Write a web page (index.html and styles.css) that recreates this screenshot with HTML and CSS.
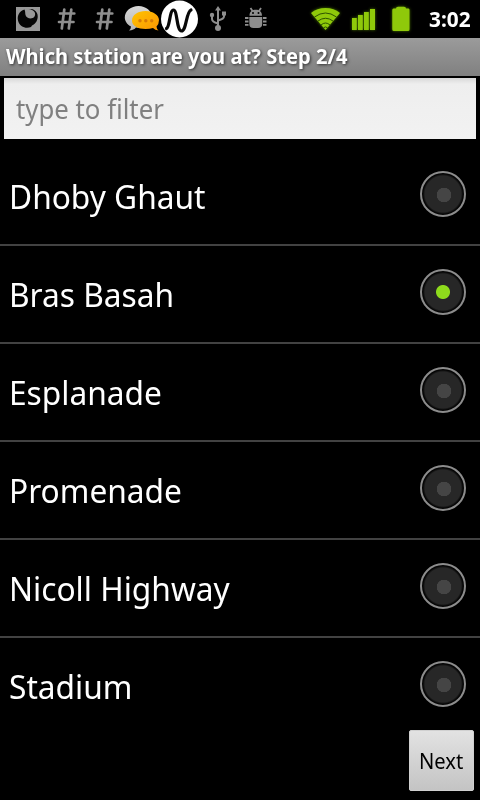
FILE: index.html
```html
<!DOCTYPE html>
<html lang="en">
  <head>
    <meta charset="UTF-8" />
    <meta name="viewport" content="width=device-width, initial-scale=1.0" />
    <title>Which station are you at?</title>
    <link rel="stylesheet" href="styles.css">
  </head>
  <body>
    <header class="status-bar">
      <div class="icons">
        <svg class="icon" viewBox="0 0 38 38">
          <rect x="7" y="7" width="24" height="24" fill="#989898" />
          <path d="M15.500 9.500C10 11 8 16 9 20.500C10.500 27 17 29 22 27L23 25.500C27 24 29.500 19 28.500 14.500C27.500 10.500 24 8.500 19.500 9C25 9.500 27.500 13 25.500 16.500C23 20 17.500 18.500 16.500 15C16 13 16.500 11.500 15.500 9.500Z" fill="#050505" />
        </svg>
        <svg class="icon" viewBox="0 0 38 38">
          <path d="M17.300 9.500L14.800 28.500M24.300 9.500L21.800 28.500M13 13.500H27.300M12 22H26.500" fill="none" stroke="#8e8e8e" stroke-width="2.700" stroke-linecap="round" />
        </svg>
        <svg class="icon" viewBox="0 0 38 38">
          <path d="M17.300 9.500L14.800 28.500M24.300 9.500L21.800 28.500M13 13.500H27.300M12 22H26.500" fill="none" stroke="#8e8e8e" stroke-width="2.700" stroke-linecap="round" />
        </svg>
        <svg class="icon" viewBox="0 0 38 38">
          <defs>
            <linearGradient id="silver" x2="0" y2="1">
              <stop offset="0" stop-color="#d8d8d8" />
              <stop offset="1" stop-color="#b5b5b5" />
            </linearGradient>
            <linearGradient id="orange" x2="1" y2="1">
              <stop offset="0" stop-color="#ffc400" />
              <stop offset="1" stop-color="#fa9404" />
            </linearGradient>
          </defs>
          <path d="M15.500 6C8 6 1.800 11 1.800 17.500C1.800 21 4 24.500 8 26.500Q8 29 6 30.500Q11 30 13 27.500C22 29 29 24 29 17.500C29 11 23 6 15.500 6Z" fill="url(#silver)" />
          <path d="M22.500 11C15 11 9 15 9 20.500C9 26 15 29 22.500 29Q27 29 30 28Q32 30 35.500 30.500Q33.500 28.500 33.500 26.500Q36 24 36 20C36 15 30 11 22.500 11Z" fill="url(#orange)" />
          <circle cx="17" cy="20.700" r="1.700" fill="#d77a05" />
          <circle cx="22.800" cy="20.700" r="1.700" fill="#d77a05" />
          <circle cx="28.700" cy="20.700" r="1.700" fill="#d77a05" />
        </svg>
        <svg class="icon" viewBox="0 0 38 38">
          <circle cx="18.500" cy="19" r="18.500" fill="#fff" />
          <path d="M5.500 28.500C9 27 8.500 10 12.500 10C16.500 10 15.500 31 20.500 31C25.500 31 25 12 30 10" fill="none" stroke="#080808" stroke-width="3.200" stroke-linecap="round" />
        </svg>
        <svg class="icon" viewBox="0 0 38 38">
          <path d="M19 9V28M19 23.500Q13 22 13 19V15M19 20.500Q25 19 25 16.500V13" fill="none" stroke="#8e8e8e" stroke-width="2" />
          <path d="M19 6l3 4.500h-6zM23 11.500h4v4h-4z" fill="#8e8e8e" />
          <circle cx="13" cy="15" r="2.200" fill="#8e8e8e" />
          <circle cx="19" cy="28" r="3" fill="#8e8e8e" />
        </svg>
        <svg class="icon" viewBox="0 0 38 38">
          <path d="M12.500 15.700C12.500 11.500 15 9.700 18.700 9.700S25 11.500 25 15.700ZM12.300 17H25.200V24Q25.200 28 21 28H16.500Q12.300 28 12.300 24Z" fill="#8e8e8e" />
          <path d="M15.500 11L13.500 8M22 11L24 8M11.500 18H8M11.500 21.500H8M11.500 24.800H8M26 18h3.500M26 21.500h3.500M26 24.800h3.500" fill="none" stroke="#8e8e8e" stroke-width="1.800" />
          <circle cx="16" cy="13" r="1" />
          <circle cx="21.500" cy="13" r="1" />
        </svg>
      </div>

      <div class="icons system">
        <svg class="icon" viewBox="0 0 38 38">
          <path d="M19.500 30L5 13Q11 8 19.500 8T34 13Z" fill="#8fc90a" />
          <path d="M8.500 17Q19.500 9 30.500 17M12 21Q19.500 15.500 27 21M15 25Q19.500 21 24 25M17.500 27.800Q19.500 26 21.500 27.800" fill="none" stroke="#2c5200" stroke-width="1" />
        </svg>
        <svg class="icon" viewBox="0 0 38 38">
          <path d="M8 18h4.800v12H8zM14 15h4.800v15H14zM20 12h4.800v18H20zM26 9h5v21h-5z" fill="#8fc90a" />
        </svg>
        <svg class="icon" viewBox="0 0 38 38">
          <path d="M14 8.500Q14 6.800 16 6.800H22Q24 6.800 24 8.500H26.500Q27.500 8.500 27.500 10V29.500Q27.500 31 26 31H12Q10.300 31 10.300 29.500V10Q10.300 8.500 11.500 8.500Z" fill="#8fc90a" />
        </svg>
      </div>
      <div class="clock"><span>3:02</span></div>
    </header>

    <h1 class="title"><span>Which station are you at? Step 2/4</span></h1>

    <div class="filter"><span>type to filter</span></div>

    <ul class="stations">
      <li class="station"><span class="name">Dhoby Ghaut</span><div class="radio"></div></li>
      <li class="station"><span class="name">Bras Basah</span><div class="radio checked"></div></li>
      <li class="station"><span class="name">Esplanade</span><div class="radio"></div></li>
      <li class="station"><span class="name">Promenade</span><div class="radio"></div></li>
      <li class="station"><span class="name">Nicoll Highway</span><div class="radio"></div></li>
      <li class="station"><span class="name">Stadium</span><div class="radio"></div></li>
    </ul>

    <footer class="footer">
      <button class="next"><span>Next</span></button>
    </footer>
  </body>
</html>
```

FILE: styles.css
```css
* {
  margin: 0;
  padding: 0;
  box-sizing: border-box;
}

body {
  width: 480px;
  height: 800px;
  display: flex;
  flex-direction: column;
  overflow: hidden;
  background-color: #000;
  color: #fff;
  font-family: "Noto Sans", sans-serif;
}

/* condensed a little, anchored to the left edge */
span {
  display: inline-block;
  white-space: nowrap;
  transform-origin: left center;
  transform: scaleX(0.96);
}

.status-bar {
  height: 38px;
  display: flex;
  padding-left: 9px;
}

.icons {
  display: flex;
}

.icon {
  width: 38px;
  height: 38px;
}

.system {
  margin-left: 31px;
  filter: drop-shadow(0 0 1.5px #4c7900);
}

.clock {
  margin-left: 9px;
  font-size: 21px;
  font-weight: bold;
  line-height: 39px;
}

.clock span {
  transform: scaleX(0.99);
}

.title {
  height: 38px;
  padding-left: 6px;
  background-image: linear-gradient(#9b9b9b, #808080);
  font-size: 21px;
  line-height: 37px;
  text-shadow: 1px 1px 3px #333;
}

.filter {
  height: 61px;
  margin: 2px 4px 0;
  padding-left: 12px;
  background-image: linear-gradient(#d8d8d8, #eeeeee 6px, #f2f2f2);
  color: #808080;
  font-size: 27px;
  line-height: 62px;
}

.filter span {
  transform: scaleX(0.955);
}

.stations {
  height: 588px;
  margin-top: 9px;
  list-style: none;
}

.station {
  height: 98px;
  padding: 0 14px 0 9px;
  display: flex;
  justify-content: space-between;
  border-bottom: 2px solid #424242;
}

.station:last-child {
  border-bottom: none;
}

.name {
  font-size: 33px;
  line-height: 98px;
}

.radio {
  width: 46px;
  height: 46px;
  margin-top: 23px;
  border: 2px solid #8c8c8c;
  border-radius: 50%;
  background-image: radial-gradient(circle at 22px 22px, #454545 7px, transparent 7.5px),
    radial-gradient(circle at 21px 21px, #272727 18px, #050505 20px);
}

.checked {
  background-image: radial-gradient(circle at 21px 21px, #8edb1c 6.5px, transparent 7.5px),
    radial-gradient(circle at 21px 21px, #272727 18px, #050505 20px);
}

.footer {
  display: flex;
  justify-content: flex-end;
  margin-top: -6px;
  padding-right: 6px;
}

.next {
  width: 65px;
  height: 61px;
  border: 1px solid #d0d0d0;
  border-radius: 2px;
  background-image: linear-gradient(#e2e2e2, #c4c4c4);
  color: #000;
  font-family: inherit;
  font-size: 21px;
  text-align: left;
  padding-left: 9px;
}
```
